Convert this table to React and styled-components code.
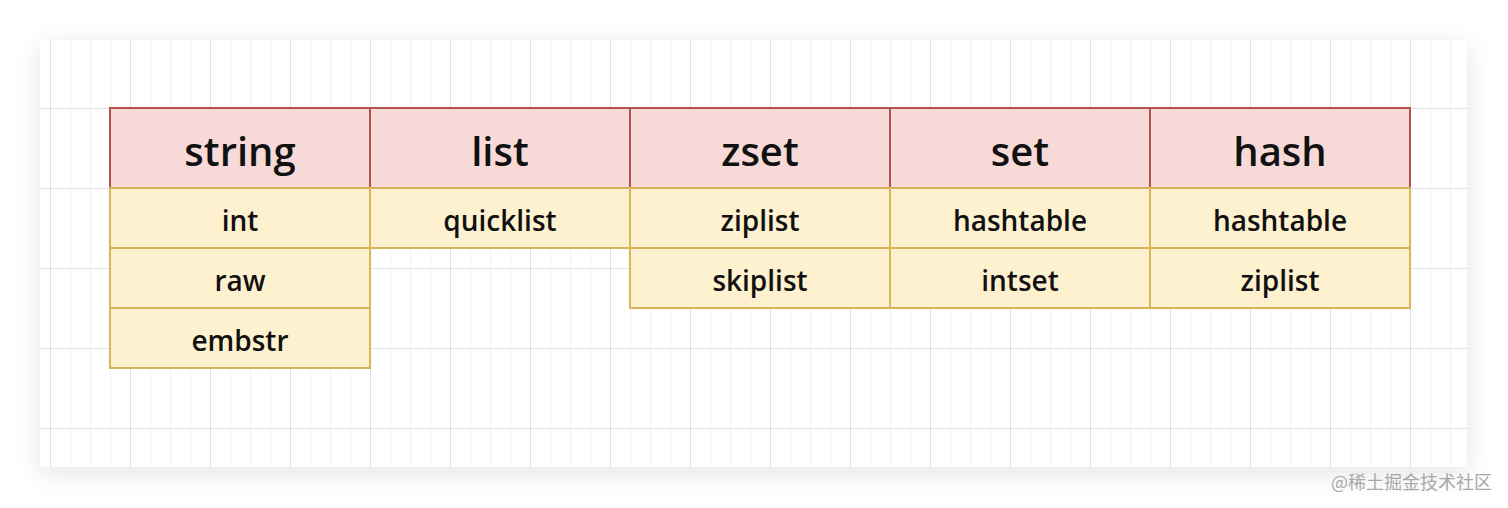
import React from "react";
import styled, { createGlobalStyle } from "styled-components";

const Global = createGlobalStyle`
  html, body { margin: 0; padding: 0; background: #ffffff; }
  body { width: 1508px; height: 508px; overflow: hidden; font-family: "Open Sans", "Noto Sans", sans-serif; }
`;

const Page = styled.div`
  position: relative;
  width: 1508px;
  height: 508px;
  padding: 40px 40px 0 40px;
  box-sizing: border-box;
`;

const Card = styled.div`
  width: 1427px;
  height: 427px;
  box-sizing: border-box;
  padding: 68px 0 0 70px;
  background-color: #ffffff;
  background-image:
    linear-gradient(to right, #e0e0e0 1px, transparent 1px),
    linear-gradient(to bottom, #e0e0e0 1px, transparent 1px),
    linear-gradient(to right, #f3f3f3 1px, transparent 1px);
  background-size: 80px 80px, 80px 80px, 20px 20px;
  background-position: 10px 68px, 10px 68px, 10px 0;
  box-shadow: 0 6px 26px rgba(0, 0, 0, 0.11);
`;

const Table = styled.div`
  display: flex;
  align-items: flex-start;
`;

const Column = styled.div`
  display: flex;
  flex-direction: column;
  width: 260px;
`;

const Cell = styled.div`
  margin: -1px;
  box-sizing: border-box;
  display: flex;
  align-items: center;
  justify-content: center;
  color: #111111;
  height: ${(p) => (p.$head ? 82 : 62)}px;
  font-size: ${(p) => (p.$head ? 40 : 28)}px;
  font-weight: 600;
  background: ${(p) => (p.$head ? "#f7dad8" : "#fef1cf")};
  border: 2px solid ${(p) => (p.$head ? "#b4524c" : "#d7b65a")};
  line-height: 1;
  padding-top: ${(p) => (p.$head ? 5 : 4)}px;
`;

const Watermark = styled.div`
  position: absolute;
  right: 16px;
  bottom: 14px;
  font-family: "Noto Sans CJK SC", "Noto Sans", sans-serif;
  font-size: 18px;
  color: #a8a8a8;
`;

const data = [
  { head: "string", rows: ["int", "raw", "embstr"] },
  { head: "list", rows: ["quicklist"] },
  { head: "zset", rows: ["ziplist", "skiplist"] },
  { head: "set", rows: ["hashtable", "intset"] },
  { head: "hash", rows: ["hashtable", "ziplist"] },
];

export default function App() {
  return (
    <Page>
      <Global />
      <Card>
        <Table>
          {data.map((col) => (
            <Column key={col.head}>
              <Cell $head>{col.head}</Cell>
              {col.rows.map((r) => (
                <Cell key={r}>{r}</Cell>
              ))}
            </Column>
          ))}
        </Table>
      </Card>
      <Watermark>@稀土掘金技术社区</Watermark>
    </Page>
  );
}
